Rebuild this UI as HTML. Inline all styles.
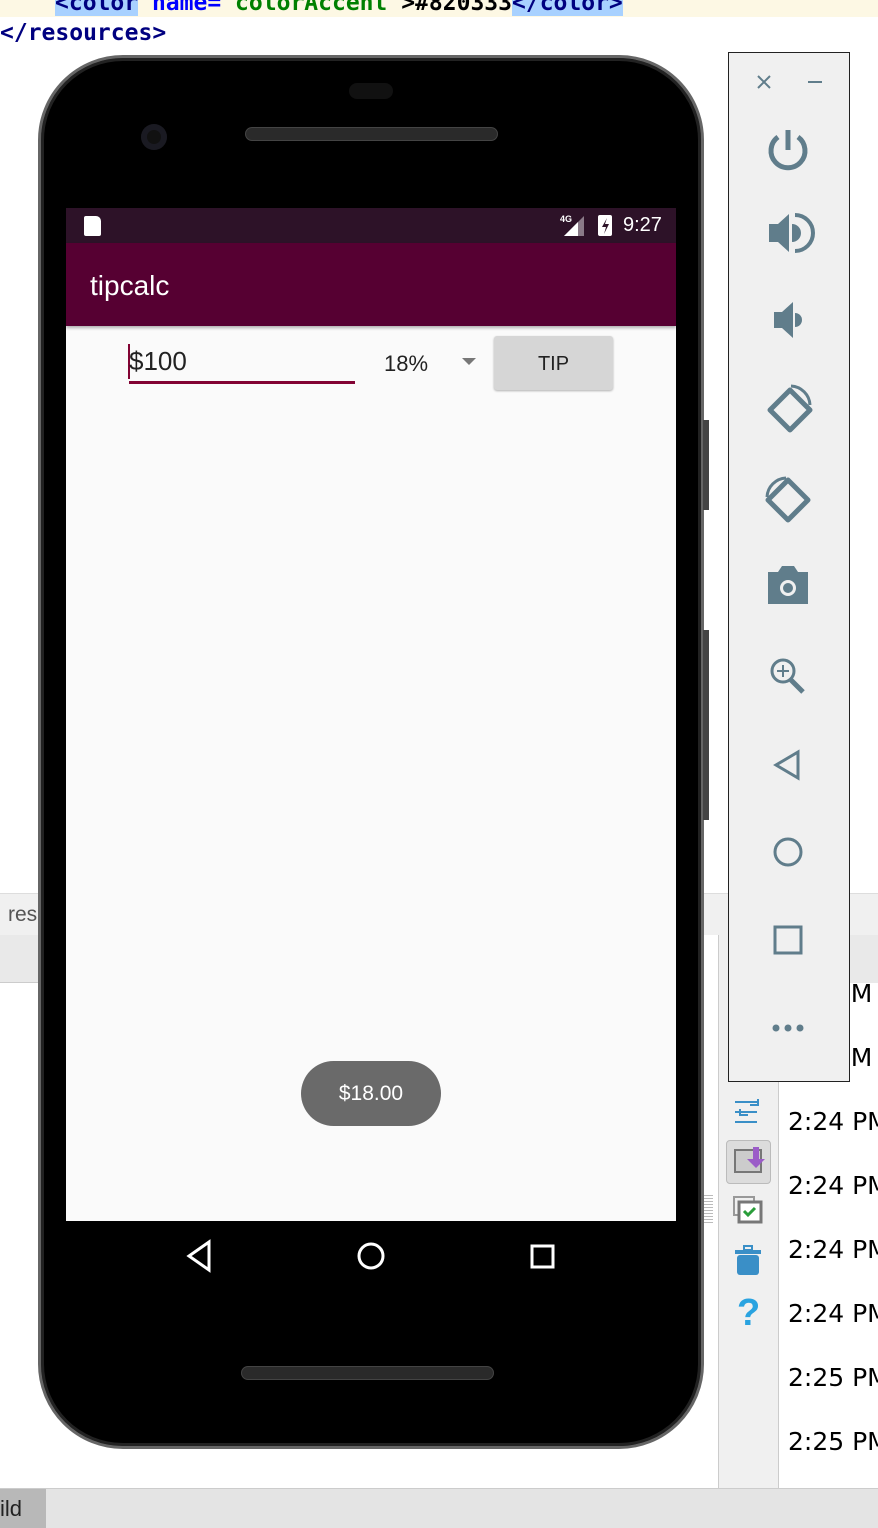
<!DOCTYPE html>
<html><head><style>
*{margin:0;padding:0;box-sizing:border-box}
body{width:878px;height:1528px;position:relative;overflow:hidden;background:#fff;font-family:"Liberation Sans",sans-serif}
.a{position:absolute}
.mono{font-family:"DejaVu Sans Mono","Liberation Mono",monospace;font-weight:bold;font-size:23px}
</style></head><body>
<div class="a" style="left:0;top:0;width:878px;height:17px;background:#fdf8e4"></div>
<div class="a mono" style="left:55px;top:-10px;white-space:pre"><span style="background:#a8d1ff;color:#000080">&lt;color</span> <span style="color:#0000ff">name=</span><span style="color:#008000">"colorAccent"</span>&gt;#820333<span style="background:#a8d1ff;color:#000080">&lt;/color&gt;</span></div>
<div class="a mono" style="left:0;top:20px;color:#000080">&lt;/resources&gt;</div>

<!-- left IDE -->
<div class="a" style="left:0;top:893px;width:60px;height:42px;background:#f0f0f0;border-top:1px solid #ddd"></div>
<div class="a" style="left:8px;top:903px;font-size:21px;color:#555">res</div>
<div class="a" style="left:0;top:935px;width:60px;height:48px;background:#e9e9e9;border-bottom:1px solid #ccc"></div>
<!-- right IDE -->
<div class="a" style="left:700px;top:893px;width:178px;height:42px;background:#f0f0f0;border-top:1px solid #ddd"></div>
<div class="a" style="left:718px;top:935px;width:160px;height:560px;background:#f0f0f0;border-left:1px solid #ccc"></div>
<div class="a" style="left:778px;top:935px;width:100px;height:48px;background:#e9e9e9;border-left:1px solid #ccc"></div>
<div class="a" style="left:778px;top:983px;width:100px;height:507px;background:#fff;border-left:1px solid #ccc"></div>
<div class="a" style="left:788px;top:962px;font-size:25px;line-height:64px;color:#000;font-family:'DejaVu Sans',sans-serif;white-space:pre">      PM
      PM
2:24 PM
2:24 PM
2:24 PM
2:24 PM
2:25 PM
2:25 PM</div>
<div class="a" style="left:726px;top:1140px;width:45px;height:44px;background:#dcdcdc;border:1px solid #bbb;border-radius:4px"></div>
<svg class="a" style="left:730px;top:1095px" width="40" height="240" viewBox="0 0 40 240">
<g stroke="#3a8fc7" stroke-width="2" fill="none"><path d="M5 7h22M5 17h22M5 27h22"/><path d="M28 4v6h-8M10 14v6h8"/></g>
<rect x="5" y="55" width="26" height="22" fill="#ccc" stroke="#777" stroke-width="2"/><path d="M23 52v12h-6l9 9 9-9h-6V52z" fill="#9b5cc8"/>
<rect x="4" y="102" width="20" height="18" fill="none" stroke="#999" stroke-width="2"/><rect x="9" y="107" width="22" height="20" fill="#fff" stroke="#777" stroke-width="3"/><path d="M14 116l4 4 7-7" stroke="#2a9d3a" stroke-width="3" fill="none"/>
<rect x="7" y="160" width="22" height="20" rx="3" fill="#3a8fc7"/><rect x="5" y="155" width="26" height="4" fill="#3a8fc7"/><rect x="14" y="151" width="8" height="4" fill="none" stroke="#3a8fc7" stroke-width="2"/>
<text x="7" y="230" font-size="38" font-weight="bold" fill="#2aa3e0" font-family="Liberation Sans">?</text>
</svg>
<div class="a" style="left:703px;top:1195px;width:10px;height:30px;background:repeating-linear-gradient(#bbb 0 1px,transparent 1px 3px)"></div>
<!-- bottom bar -->
<div class="a" style="left:0;top:1488px;width:878px;height:40px;background:#e4e4e4;border-top:1px solid #ccc"></div>
<div class="a" style="left:0;top:1489px;width:46px;height:39px;background:#b8b8b8"></div>
<div class="a" style="left:0;top:1496px;font-size:22px;color:#222">ild</div>

<!-- phone -->
<div class="a" style="left:38px;top:55px;width:666px;height:1394px;background:#000;border-radius:85px;border:3px solid #666;box-shadow:inset 0 0 0 3px #222"></div>
<div class="a" style="left:349px;top:83px;width:44px;height:16px;background:#111;border-radius:8px"></div>
<div class="a" style="left:141px;top:124px;width:26px;height:26px;background:#111;border-radius:50%;box-shadow:inset 0 0 0 6px #1a1a22"></div>
<div class="a" style="left:245px;top:127px;width:253px;height:14px;background:#2a2a2a;border-radius:7px;border:1px solid #444"></div>
<div class="a" style="left:241px;top:1366px;width:253px;height:14px;background:#2a2a2a;border-radius:7px;border:1px solid #444"></div>
<div class="a" style="left:703px;top:420px;width:6px;height:90px;background:#444"></div>
<div class="a" style="left:703px;top:630px;width:6px;height:190px;background:#444"></div>

<!-- screen -->
<div class="a" style="left:66px;top:208px;width:610px;height:1013px;background:#fafafa"></div>
<div class="a" style="left:66px;top:208px;width:610px;height:35px;background:#2d1228"></div>
<div class="a" style="left:84px;top:216px;width:17px;height:20px;background:#fff;border-radius:2px 5px 2px 2px"></div>
<div class="a" style="left:560px;top:214px;font-size:9px;color:#fff;font-weight:bold">4G</div>
<svg class="a" style="left:564px;top:216px" width="24" height="20"><path d="M20 0V20H0z" fill="#8a7a88"/><path d="M14 6V20H0z" fill="#fff"/></svg>
<div class="a" style="left:598px;top:215px;width:14px;height:21px;background:#fff;border-radius:2px"></div>
<svg class="a" style="left:598px;top:215px" width="14" height="21"><path d="M9 3L4 12h4l-2 7 5-10H7z" fill="#2d1228"/></svg>
<div class="a" style="left:623px;top:214px;font-size:20px;color:#fff">9:27</div>
<div class="a" style="left:66px;top:243px;width:610px;height:83px;background:#560032;box-shadow:0 2px 3px rgba(0,0,0,.3)"></div>
<div class="a" style="left:90px;top:270px;font-size:28px;color:#fff">tipcalc</div>
<div class="a" style="left:128px;top:344px;width:2px;height:35px;background:#820333"></div>
<div class="a" style="left:129px;top:346px;font-size:26px;color:#222">$100</div>
<div class="a" style="left:129px;top:381px;width:226px;height:3px;background:#820333"></div>
<div class="a" style="left:384px;top:351px;font-size:22px;color:#222">18%</div>
<div class="a" style="left:462px;top:358px;width:0;height:0;border-left:7px solid transparent;border-right:7px solid transparent;border-top:7px solid #777"></div>
<div class="a" style="left:494px;top:336px;width:119px;height:54px;background:#d6d6d6;border-radius:3px;box-shadow:0 1px 2px rgba(0,0,0,.3);text-align:center;line-height:56px;font-size:20px;color:#222">TIP</div>
<div class="a" style="left:301px;top:1061px;width:140px;height:65px;background:#6a6a6a;border-radius:33px;text-align:center;line-height:66px;font-size:21px;color:#fff">$18.00</div>
<!-- nav -->
<svg class="a" style="left:180px;top:1236px" width="400" height="40" fill="none" stroke="#fff" stroke-width="3">
<path d="M29 6L9 20l20 14z"/><circle cx="191" cy="20" r="12"/><rect x="352" y="10" width="21" height="21"/></svg>

<!-- emulator sidebar -->
<div class="a" style="left:728px;top:52px;width:122px;height:1030px;background:#f0f0f0;border:1px solid #222"></div>
<svg class="a" style="left:728px;top:52px" width="122" height="1030" viewBox="0 0 122 1030">
<g stroke="#607d8b" stroke-width="2" fill="none"><path d="M30 24l12 12M42 24l-12 12M80 30h14"/></g>
<g stroke="#607d8b" stroke-width="5" fill="none"><path d="M60 78v20"/><path d="M50 85a17 17 0 1 0 20 0"/></g>
<path d="M41 172h9l11-10v38l-11-10h-9z" fill="#607d8b"/><path d="M64 172a9 9 0 0 1 0 18z" fill="#607d8b"/><path d="M67 163a18 18 0 0 1 0 36" stroke="#607d8b" stroke-width="4" fill="none"/>
<path d="M46 260h8l11-10v36l-11-10h-8z" fill="#607d8b"/><path d="M67 261a7 7 0 0 1 0 14z" fill="#607d8b"/>
<g stroke="#607d8b" stroke-width="5" fill="none" stroke-linejoin="round"><path d="M42 358l20-20 20 20-20 20z"/><path d="M63 334a20 20 0 0 1 19 19" stroke-width="3"/>
<path d="M40 448l20-20 20 20-20 20z"/><path d="M39 445a20 20 0 0 1 19-19" stroke-width="3"/></g>
<path d="M40 520h10l4-6h12l4 6h10v32H40z" fill="#607d8b"/><circle cx="60" cy="536" r="8" fill="#f0f0f0"/><circle cx="60" cy="536" r="5" fill="#607d8b"/>
<g stroke="#607d8b" stroke-width="3" fill="none"><circle cx="55" cy="619" r="11"/><path d="M63 628l12 12" stroke-width="5"/><path d="M55 613v12M49 619h12" stroke-width="2"/>
<path d="M70 700l-22 13 22 13z"/><circle cx="60" cy="800" r="13"/><rect x="47" y="875" width="26" height="26"/></g>
<g fill="#607d8b"><circle cx="48" cy="976" r="3.5"/><circle cx="60" cy="976" r="3.5"/><circle cx="72" cy="976" r="3.5"/></g>
</svg>
</body></html>
